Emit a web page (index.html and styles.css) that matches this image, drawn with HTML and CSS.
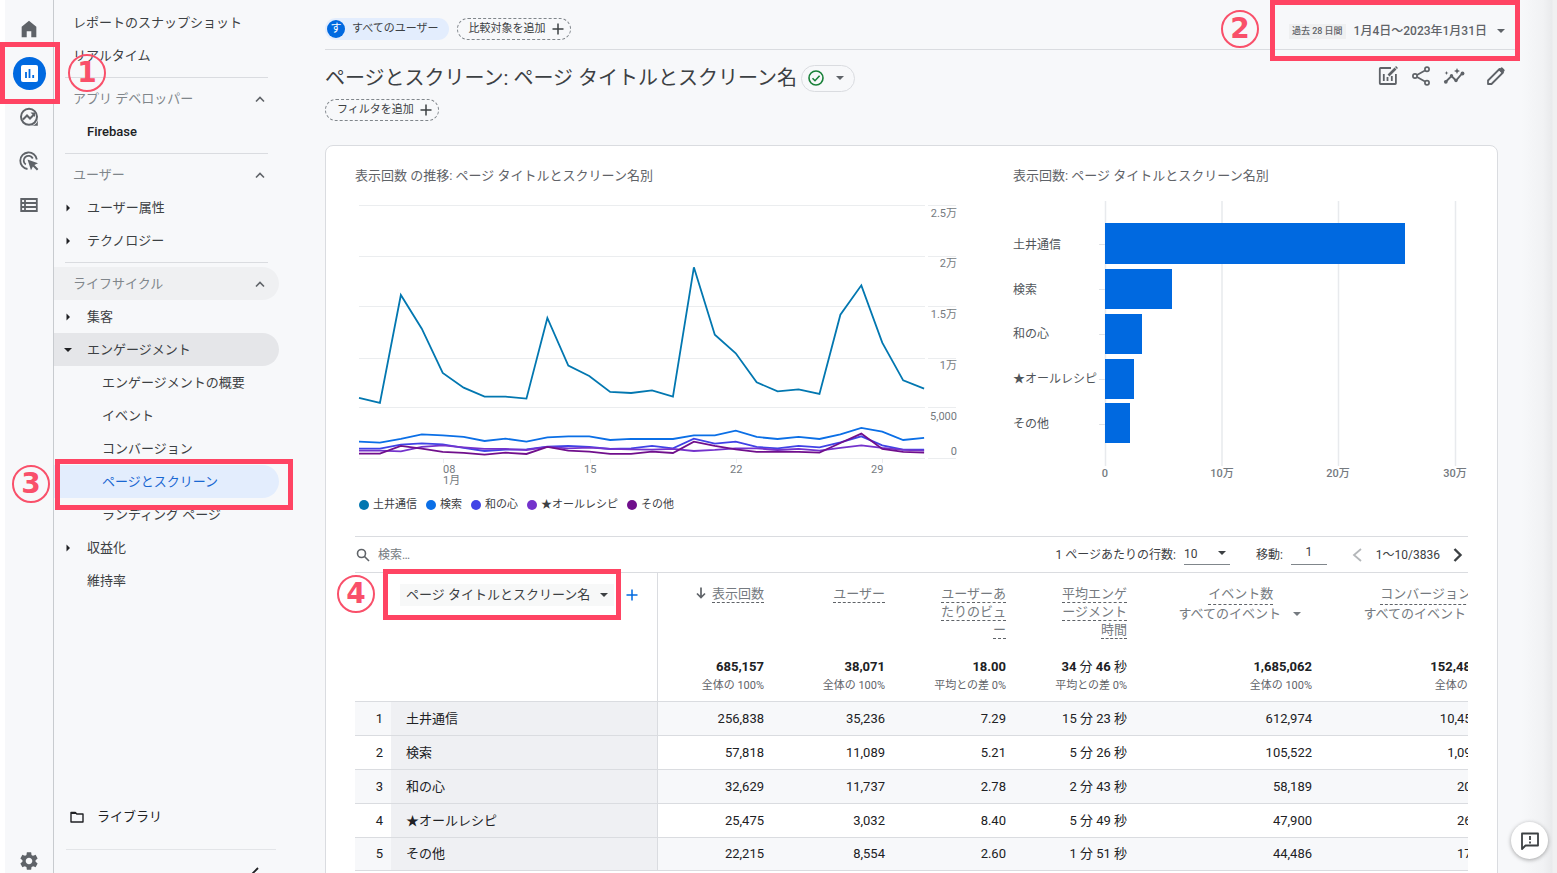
FILE: index.html
```html
<!DOCTYPE html>
<html lang="ja">
<head>
<meta charset="utf-8">
<title>ページとスクリーン</title>
<link rel="stylesheet" href="styles.css">
</head>
<body>
<svg class="sprite" aria-hidden="true">
  <symbol id="up" viewBox="0 0 12 12"><path d="M2 8.5l4-4 4 4" fill="none" stroke="currentColor" stroke-width="1.6"/></symbol>
  <symbol id="right" viewBox="0 0 12 12"><path d="M4.500 2.500v7l3.500-3.500z" fill="currentColor"/></symbol>
  <symbol id="down" viewBox="0 0 12 12"><path d="M2 4h8L6 8z" fill="currentColor"/></symbol>
  <symbol id="plus" viewBox="0 0 12 12"><path d="M6 .5v11M.5 6h11" fill="none" stroke="currentColor" stroke-width="1.5"/></symbol>
</svg>
<div class="app">
  <nav class="rail" aria-label="メイン">
    <a class="rail-item" href="#" aria-label="ホーム"><svg width="22" height="22" viewBox="0 0 24 24"><path d="M4 21V9.500L12 3l8 6.500V21h-5.500v-6.500h-5V21z" fill="currentColor"/></svg></a>
    <a class="rail-item" href="#" aria-label="レポート">
      <span class="rail-active"><svg width="17" height="17" viewBox="0 0 17 17"><rect width="17" height="17" rx="2" fill="#fff"/><path d="M5 7v6M8.500 4v9M12.200 10v3" stroke="#0069e0" stroke-width="1.800"/></svg></span>
      <span class="frame frame-rail"></span><span class="step step-rail">1</span>
    </a>
    <a class="rail-item" href="#" aria-label="探索"><svg width="20" height="20" viewBox="0 0 20 20"><g fill="none" stroke="currentColor" stroke-width="2"><circle cx="10" cy="9.800" r="8"/><path d="M4 12.500l4-4 3 3 4.500-4.500"/></g><path d="M11.500 5.500H16V10zM12 18.800c4 0 6.800-3 6.800-7v7z" fill="currentColor"/></svg></a>
    <a class="rail-item" href="#" aria-label="広告"><svg width="20" height="20" viewBox="0 0 20 20"><g fill="none" stroke="currentColor" stroke-width="1.800"><path d="M8.500 18A8.300 8.300 0 1 1 17.800 8.500"/><path d="M6.800 13.600A4.800 4.800 0 1 1 13.800 7.500"/></g><path d="M8.500 8.500l10.500 3.700-3.600 1.900 4 4-1.500 1.500-4-4-1.900 3.700z" fill="currentColor"/></svg></a>
    <a class="rail-item" href="#" aria-label="設定"><svg width="18" height="16" viewBox="0 0 18 16"><path d="M1.200 2h15.600v12H1.200zM1 6h16M1 10h16M5 2v12" fill="none" stroke="currentColor" stroke-width="1.800"/></svg></a>
    <a class="rail-item rail-bottom" href="#" aria-label="管理"><svg width="22" height="22" viewBox="0 0 24 24"><path fill="currentColor" d="M19.140 12.940c.04-.3.060-.61.060-.94 0-.32-.02-.64-.07-.94l2.030-1.580c.18-.14.23-.41.120-.61l-1.920-3.320c-.12-.22-.37-.29-.59-.22l-2.390.96c-.5-.38-1.030-.7-1.620-.94l-.36-2.540c-.04-.24-.24-.41-.48-.41h-3.840c-.24 0-.43.17-.47.41l-.36 2.540c-.59.24-1.130.57-1.620.94l-2.390-.96c-.22-.08-.47 0-.59.220L2.740 8.870c-.12.210-.08.470.120.610l2.030 1.580c-.05.3-.09.630-.09.940s.02.640.07.940l-2.030 1.580c-.18.140-.23.410-.12.610l1.920 3.320c.12.220.370.290.590.220l2.390-.96c.5.380 1.030.7 1.620.940l.36 2.540c.05.240.240.410.480.410h3.840c.24 0 .44-.17.470-.41l.36-2.540c.59-.24 1.130-.56 1.620-.94l2.390.96c.22.080.470 0 .59-.22l1.920-3.320c.12-.22.070-.47-.12-.61l-2.010-1.580zM12 15.600c-1.980 0-3.600-1.620-3.600-3.600s1.620-3.600 3.600-3.600 3.600 1.620 3.600 3.600-1.620 3.600-3.600 3.600z"/></svg></a>
  </nav>

  <nav class="menu" aria-label="レポート">
    <a class="row" href="#">レポートのスナップショット</a>
    <a class="row" href="#">リアルタイム</a>
    <hr>
    <button class="row group">アプリ デベロッパー<svg class="i12 chev"><use href="#up"/></svg></button>
    <a class="row sub latin" href="#">Firebase</a>
    <hr>
    <button class="row group">ユーザー<svg class="i12 chev"><use href="#up"/></svg></button>
    <a class="row tree" href="#"><svg class="i12"><use href="#right"/></svg>ユーザー属性</a>
    <a class="row tree" href="#"><svg class="i12"><use href="#right"/></svg>テクノロジー</a>
    <hr>
    <button class="row group hover">ライフサイクル<svg class="i12 chev"><use href="#up"/></svg></button>
    <a class="row tree" href="#"><svg class="i12"><use href="#right"/></svg>集客</a>
    <a class="row tree open" href="#"><svg class="i12"><use href="#down"/></svg>エンゲージメント</a>
    <a class="row leaf" href="#">エンゲージメントの概要</a>
    <a class="row leaf" href="#">イベント</a>
    <a class="row leaf" href="#">コンバージョン</a>
    <a class="row leaf current" href="#">ページとスクリーン<span class="frame frame-menu"></span><span class="step step-menu">3</span></a>
    <a class="row leaf" href="#">ランディング ページ</a>
    <a class="row tree" href="#"><svg class="i12"><use href="#right"/></svg>収益化</a>
    <a class="row sub" href="#">維持率</a>
    <div class="menu-foot">
      <a class="row library" href="#"><svg width="14" height="12" viewBox="0 0 14 12"><path d="M1 1.500h4.300l1.500 1.500H13v8H1z" fill="none" stroke="currentColor" stroke-width="1.400" stroke-linejoin="round"/><path d="M1 1h4.500L7 3H1z" fill="currentColor"/></svg>ライブラリ</a>
      <button class="collapse" aria-label="メニューを閉じる"><svg width="10" height="14" viewBox="0 0 10 14"><path d="M8 1L2 7l6 6" fill="none" stroke="currentColor" stroke-width="1.800"/></svg></button>
    </div>
  </nav>

  <main class="main">
    <header class="top">
      <button class="chip audience"><span class="avatar">す</span>すべてのユーザー</button>
      <button class="chip dashed">比較対象を追加<svg class="i12"><use href="#plus"/></svg></button>
      <button class="date"><span class="preset">過去 28 日間</span><span>1月4日〜2023年1月31日</span><svg class="i12"><use href="#down"/></svg><span class="frame frame-date"></span><span class="step step-date">2</span></button>
    </header>
    <div class="heading">
      <h1>ページとスクリーン: ページ タイトルとスクリーン名</h1>
      <button class="status" aria-label="データ品質"><svg width="16" height="16" viewBox="0 0 16 16"><circle cx="8" cy="8" r="7" fill="none" stroke="#188038" stroke-width="1.600"/><path d="M4.500 8.200l2.500 2.500 4.600-4.900" fill="none" stroke="#188038" stroke-width="1.600"/></svg><svg class="i12"><use href="#down"/></svg></button>
      <div class="tools">
        <button aria-label="比較を編集"><svg width="24" height="24" viewBox="0 0 24 24" fill="none" stroke="currentColor" stroke-width="1.800"><path d="M15 4H4.500Q3.800 4 3.800 4.700v14.600q0 .7.700.7h14.700q.7 0 .7-.7V10"/><path d="M7.800 10v7M11.500 13v4M15.800 12v5"/><path d="M12.500 11.500l7-7" stroke-width="2.600"/><path d="M20 4l1-1" stroke-width="2.600"/></svg></button>
        <button aria-label="共有"><svg width="24" height="24" viewBox="0 0 24 24" fill="none" stroke="currentColor" stroke-width="1.700"><circle cx="18" cy="5.300" r="2.100"/><circle cx="6" cy="12" r="2.100"/><circle cx="18" cy="18.700" r="2.100"/><path d="M8 11l8-4.600M8 13l8 4.600"/></svg></button>
        <button class="wide-gap" aria-label="インサイト"><svg width="24" height="24" viewBox="0 0 24 24"><path d="M4 17.500l5.500-5.500 4.500 4.500 6.500-7.500" fill="none" stroke="currentColor" stroke-width="1.900"/><g fill="currentColor"><circle cx="3.800" cy="17.800" r="1.900"/><circle cx="9.500" cy="11.700" r="1.700"/><circle cx="14" cy="16.500" r="1.700"/><circle cx="20.500" cy="9.500" r="1.900"/><path d="M15 4l.9 2.100L18 7l-2.100.9L15 10l-.9-2.100L12 7l2.100-.9zM4.500 7l.6 1.400 1.400.6-1.400.6-.6 1.400-.6-1.400L2.500 9l1.400-.6z"/></g></svg></button>
        <button aria-label="編集"><svg width="24" height="24" viewBox="0 0 24 24"><path d="M4 20v-3.500L15.500 5l3.500 3.500L7.500 20z" fill="none" stroke="currentColor" stroke-width="1.800" stroke-linejoin="round"/><path d="M14.500 6l2.300-2.300q.9-.9 1.800 0l1.700 1.700q.9.900 0 1.800L18 9.500z" fill="currentColor"/></svg></button>
      </div>
    </div>
    <button class="chip dashed filter">フィルタを追加<svg class="i12"><use href="#plus"/></svg></button>

    <section class="card">
      <div class="charts">
        <figure>
          <figcaption>表示回数 の推移: ページ タイトルとスクリーン名別</figcaption>
          <svg class="plot" viewBox="355 196 602 294">
            <path d="M359 205.500h566m3 0h28M359 256.500h566m3 0h28M359 306.500h566m3 0h28M359 358.500h566m3 0h28M359 407.500h566m3 0h28M359 458.500h566m3 0h28M443.500 459v4M590.500 459v4M736.500 459v4M882.500 459v4" stroke="#ebedef" fill="none"/>
            <g class="series" transform="translate(359 190) scale(20.930 .3333)">
              <polyline stroke="#0277b0" points="0,624 1,639 2,315 3,416 4,549 5,593 6,620 7,620 8,626 9,384 10,527 11,558 12,606 13,609 14,601 15,620 16,232 17,434 18,490 19,577 20,604 21,598 22,612 23,374 24,286 25,458 26,571 27,596"/>
              <polyline stroke="#0b6fe6" points="0,755 1,758 2,747 3,733 4,736 5,741 6,753 7,746 8,755 9,742 10,739 11,739 12,750 13,747 14,747 15,747 16,736 17,736 18,722 19,741 20,747 21,741 22,747 23,733 24,714 25,725 26,750 27,744"/>
              <polyline stroke="#4043e6" points="0,776 1,776 2,764 3,760 4,763 5,774 6,783 7,779 8,778 9,770 10,768 11,771 12,777 13,775 14,768 15,775 16,746 17,761 18,755 19,771 20,775 21,768 22,772 23,757 24,739 25,766 26,779 27,779"/>
              <polyline stroke="#7433cc" points="0,782 1,782 2,784 3,771 4,766 5,772 6,777 7,777 8,780 9,771 10,775 11,773 12,777 13,778 14,779 15,777 16,783 17,780 18,775 19,775 20,780 21,777 22,782 23,774 24,766 25,774 26,780 27,782"/>
              <polyline stroke="#700f8c" points="0,791 1,791 2,768 3,776 4,786 5,789 6,794 7,788 8,792 9,771 10,782 11,785 12,792 13,792 14,785 15,789 16,755 17,768 18,778 19,786 20,785 21,786 22,788 23,759 24,731 25,777 26,786 27,788"/>
            </g>
            <g class="axis" text-anchor="end"><text x="957" y="217">2.5万</text><text x="957" y="267">2万</text><text x="957" y="318">1.5万</text><text x="957" y="369">1万</text><text x="957" y="420">5,000</text><text x="957" y="455">0</text></g>
            <g class="axis"><text x="443" y="473">08</text><text x="443" y="484">1月</text><text x="584" y="473">15</text><text x="730" y="473">22</text><text x="871" y="473">29</text></g>
          </svg>
          <ul class="legend"><li class="s1">土井通信</li><li class="s2">検索</li><li class="s3">和の心</li><li class="s4">★オールレシピ</li><li class="s5">その他</li></ul>
        </figure>
        <figure>
          <figcaption>表示回数: ページ タイトルとスクリーン名別</figcaption>
          <svg class="plot" viewBox="1013 196 455 294">
            <path d="M1105.500 201v265M1222 201v265M1338.500 201v265M1455.500 201v265" stroke="#e8eaed" stroke-width="1.500"/>
            <path d="M1099 244.500h6M1099 289.500h6M1099 334.500h6M1099 379.500h6M1099 424.500h6" stroke="#e0e3e6"/>
            <g fill="#0069e0"><rect x="1105" y="223" width="300" height="41"/><rect x="1105" y="269" width="67" height="40"/><rect x="1105" y="314" width="37" height="40"/><rect x="1105" y="359" width="29" height="40"/><rect x="1105" y="403" width="25" height="40"/></g>
            <g class="names"><text x="1013" y="249">土井通信</text><text x="1013" y="294">検索</text><text x="1013" y="338">和の心</text><text x="1013" y="383">★オールレシピ</text><text x="1013" y="428">その他</text></g>
            <g class="axis heavy" text-anchor="middle"><text x="1105" y="477">0</text><text x="1222" y="477">10万</text><text x="1338" y="477">20万</text><text x="1455" y="477">30万</text></g>
          </svg>
        </figure>
      </div>

      <div class="bar">
        <label class="search"><svg width="14" height="14" viewBox="0 0 14 14"><g fill="none" stroke="currentColor" stroke-width="1.600"><circle cx="5.500" cy="5.500" r="4"/><path d="M8.500 8.500l4.500 4.500"/></g></svg><input type="search" placeholder="検索…" aria-label="検索"></label>
        <label for="rows">1 ページあたりの行数:</label>
        <span class="select"><select id="rows"><option>10</option><option>25</option></select><svg class="i12"><use href="#down"/></svg></span>
        <label for="goto" class="goto">移動:</label>
        <input id="goto" class="page" type="text" value="1">
        <button class="pager prev" aria-label="前へ"><svg width="20" height="20" viewBox="0 0 20 20"><path d="M13 4l-7 6 7 6" fill="none" stroke="#b4b7ba" stroke-width="1.800"/></svg></button>
        <span>1〜10/3836</span>
        <button class="pager" aria-label="次へ"><svg width="20" height="20" viewBox="0 0 20 20"><path d="M6.500 4l6 6-6 6" fill="none" stroke="currentColor" stroke-width="2.400"/></svg></button>
      </div>

      <div class="table-wrap">
        <span class="frame frame-table"></span><span class="step step-table">4</span>
        <div class="scroller">
          <table>
            <colgroup><col class="c-no"><col><col class="c-num"><col class="c-num"><col class="c-num"><col class="c-num"><col class="c-evt"><col class="c-evt"></colgroup>
            <thead>
              <tr class="labels">
                <th></th>
                <th class="name"><div class="dim"><button class="dim-pick">ページ タイトルとスクリーン名<svg class="i12"><use href="#down"/></svg></button><button class="add" aria-label="ディメンションを追加"><svg class="i12"><use href="#plus"/></svg></button></div></th>
                <th><svg class="sort" width="10" height="12" viewBox="0 0 10 12"><path d="M5 .5v10M1 6.500l4 4 4-4" fill="none" stroke="currentColor" stroke-width="1.700"/></svg><span class="u">表示回数</span></th>
                <th><span class="u">ユーザー</span></th>
                <th><span class="u">ユーザーあ<br>たりのビュ<br>ー</span></th>
                <th><span class="u">平均エンゲ<br>ージメント<br>時間</span></th>
                <th><div class="metric"><span class="u">イベント数</span><button>すべてのイベント<svg class="i12"><use href="#down"/></svg></button></div></th>
                <th><div class="metric"><span class="u">コンバージョン</span><button>すべてのイベント<svg class="i12"><use href="#down"/></svg></button></div></th>
              </tr>
              <tr class="totals">
                <td></td><td class="name"></td>
                <td><b>685,157</b><small>全体の 100%</small></td>
                <td><b>38,071</b><small>全体の 100%</small></td>
                <td><b>18.00</b><small>平均との差 0%</small></td>
                <td><b>34 <i>分</i> 46 <i>秒</i></b><small>平均との差 0%</small></td>
                <td><b>1,685,062</b><small>全体の 100%</small></td>
                <td><b>152,480.00</b><small>全体の 100%</small></td>
              </tr>
            </thead>
            <tbody>
              <tr><td>1</td><td class="name">土井通信</td><td>256,838</td><td>35,236</td><td>7.29</td><td>15 分 23 秒</td><td>612,974</td><td>10,450.00</td></tr>
              <tr><td>2</td><td class="name">検索</td><td>57,818</td><td>11,089</td><td>5.21</td><td>5 分 26 秒</td><td>105,522</td><td>1,090.00</td></tr>
              <tr><td>3</td><td class="name">和の心</td><td>32,629</td><td>11,737</td><td>2.78</td><td>2 分 43 秒</td><td>58,189</td><td>200.00</td></tr>
              <tr><td>4</td><td class="name">★オールレシピ</td><td>25,475</td><td>3,032</td><td>8.40</td><td>5 分 49 秒</td><td>47,900</td><td>260.00</td></tr>
              <tr><td>5</td><td class="name">その他</td><td>22,215</td><td>8,554</td><td>2.60</td><td>1 分 51 秒</td><td>44,486</td><td>170.00</td></tr>
            </tbody>
          </table>
        </div>
      </div>
    </section>
  </main>
  <button class="feedback" aria-label="フィードバック"><svg width="20" height="20" viewBox="0 0 20 20"><path d="M2 18V2.500h16v12H5.500z" fill="none" stroke="currentColor" stroke-width="1.800" stroke-linejoin="round"/><path d="M10 5v4M10 10.500v2" stroke="currentColor" stroke-width="1.800"/></svg></button>
</div>
</body>
</html>
```
FILE: styles.css
```css
* { box-sizing: border-box; }
body {
  margin: 0;
  background: #fff;
  color: #3c4043;
  font: 13px/18px Roboto, "Noto Sans CJK JP", sans-serif;
}
button, input, select { font: inherit; color: inherit; background: none; border: 0; padding: 0; margin: 0; border-radius: 0; outline: 0; }
a { color: inherit; text-decoration: none; }
svg { display: block; flex: none; }
.sprite { position: absolute; width: 0; height: 0; }
.i12 { width: 12px; height: 12px; }

.app {
  display: flex;
  height: 100vh;
  overflow: hidden;
  padding-left: 5px;
  background: linear-gradient(to right, #fff 5px, #f7f8fa 5px, #f7f8fa calc(100% - 36px), #f1f2f4 calc(100% - 14px), #e9eaec calc(100% - 5px), #f0f0f1 calc(100% - 4px));
}

/* icon rail */
.rail {
  display: flex;
  flex-direction: column;
  width: 49px;
  padding-top: 7px;
  border-right: 1px solid #c8cbcf;
  color: #5f6368;
}
.rail-item { position: relative; display: flex; align-items: center; justify-content: center; height: 44px; }
.rail-active { display: flex; align-items: center; justify-content: center; width: 33px; height: 33px; border-radius: 50%; background: #0069e0; }
.rail-bottom { margin-top: auto; height: 24px; }

/* report menu */
.menu { display: flex; flex-direction: column; width: 225px; padding-top: 6px; color: #3c4043; }
.menu hr { width: 203px; height: 1px; margin: 5px 0 4px 11px; border: 0; background: #dadce0; }
.row { position: relative; display: flex; align-items: center; flex: none; height: 33px; width: 100%; padding-left: 19px; border-radius: 0 17px 17px 0; text-align: left; }
.group { color: #80868b; }
.chev { margin: 0 13px 0 auto; color: #5f6368; }
.hover { background: #eff0f2; }
.sub { padding-left: 33px; }
.tree { padding-left: 8px; gap: 13px; }
.tree .i12 { color: #202124; }
.leaf { padding-left: 48px; }
.open { background: #e5e6e9; }
.current { background: #e3edfd; color: #1967d2; }
.latin { font-weight: 500; color: #202124; }
.menu-foot { margin-top: auto; }
.library { padding-left: 16px; gap: 13px; color: #202124; }
.collapse { display: block; width: 210px; height: 24px; margin: 16px 0 0 12px; padding: 17px 16px 0 0; border-top: 1px solid #e3e5e8; overflow: hidden; color: #202124; }
.collapse svg { margin-left: auto; }

/* main column */
.main { flex: 1; min-width: 0; margin: 0 42px 0 46px; }
.top { display: flex; align-items: center; height: 50px; padding: 9px 8px 0 0; border-bottom: 1px solid #dadce0; gap: 8px; }
.chip { display: flex; align-items: center; height: 22px; border-radius: 11px; font-size: 11px; white-space: nowrap; }
.audience { background: #e3edfd; gap: 7px; padding: 0 10px 0 2px; }
.avatar { width: 18px; height: 18px; border-radius: 50%; background: #0069e0; color: #fff; text-align: center; line-height: 18px; }
.dashed { border: 1px dashed #80868b; gap: 6px; padding: 0 6px 0 11px; }
.date { position: relative; display: flex; align-items: center; gap: 8px; margin: 4px 0 0 auto; font-size: 12px; font-weight: 500; color: #5f6368; white-space: nowrap; }
.preset { padding: 0 3px; background: #eff0f1; font-size: 9px; line-height: 15px; }
.heading { display: flex; align-items: center; height: 28px; margin-top: 14px; padding-right: 7px; }
h1 { margin: 0; font-size: 20px; line-height: 28px; font-weight: 400; white-space: nowrap; color: #3c4043; }
.status { display: flex; align-items: center; gap: 10px; width: 54px; height: 27px; margin-left: 4px; padding-left: 6px; border: 1px solid #dadce0; border-radius: 14px; color: #5f6368; }
.tools { display: flex; align-self: flex-start; gap: 9px; margin-left: auto; color: #5f6368; }
.wide-gap { margin-right: 9px; }
.filter { margin-top: 7px; }

/* report card */
.card { margin: 24px 17px 0 0; padding: 20px 29px; border: 1px solid #dadce0; border-radius: 8px; background: #fff; }
.charts { display: grid; grid-template-columns: 602fr 455fr; gap: 56px; }
figure { margin: 0; }
figcaption { line-height: 20px; color: #5f6368; white-space: nowrap; }
.plot { width: 100%; height: auto; margin-top: 10px; overflow: visible; }
.series polyline { fill: none; stroke-width: 1.8px; vector-effect: non-scaling-stroke; }
.axis { font-size: 11px; fill: #757a80; }
.heavy { font-weight: 500; }
.names { font-size: 12px; fill: #50555a; }
.legend { display: flex; gap: 9px; margin: 6px 0 0 4px; padding: 0; list-style: none; font-size: 11px; }
.legend li { display: flex; align-items: center; gap: 4px; }
.legend li::before { content: ""; width: 10px; height: 10px; border-radius: 50%; }
.legend .s1::before { background: #0277b0; }
.legend .s2::before { background: #0b6fe6; }
.legend .s3::before { background: #4043e6; }
.legend .s4::before { background: #7433cc; }
.legend .s5::before { background: #700f8c; }

.bar { display: flex; align-items: center; height: 37px; margin-top: 22px; border: solid #dadce0; border-width: 1px 0; gap: 8px; font-size: 12px; white-space: nowrap; }
.search { display: flex; align-items: center; gap: 8px; margin-right: auto; padding-left: 1px; color: #5f6368; }
.search input { width: 160px; }
.search input::placeholder { color: #757a80; opacity: 1; }
.select { position: relative; display: block; }
.select select { display: block; width: 46px; height: 20px; padding-bottom: 4px; border-bottom: 1px solid #80868b; appearance: none; }
.select svg { position: absolute; right: 2px; top: 2px; pointer-events: none; }
.goto { margin-left: 18px; }
.page { width: 36px; height: 20px; padding-bottom: 4px; border-bottom: 1px solid #80868b; text-align: center; }
.prev { margin-left: 13px; }

.table-wrap { position: relative; }
.scroller { overflow: hidden; }
table { width: 100%; min-width: 1157px; table-layout: fixed; border-collapse: separate; border-spacing: 0; }
.c-no { width: 36px; }
.c-num { width: 121px; }
.c-evt { width: 185px; }
th, td { padding: 0 15px 0 0; text-align: right; font-weight: 400; white-space: nowrap; }
th.name, td.name { padding: 0 0 0 15px; text-align: left; border-right: 1px solid #dadce0; }
.labels th { height: 84px; padding-top: 12px; vertical-align: top; color: #757a80; }
.labels th.name { padding-top: 11px; }
.u { padding-bottom: 1px; border-bottom: 1px dashed #5f6368; }
.sort { display: inline-block; margin-right: 6px; vertical-align: -1px; color: #5f6368; }
.dim { display: flex; align-items: center; gap: 12px; margin-left: -6px; color: #3c4043; }
.dim-pick { display: flex; align-items: center; gap: 8px; height: 22px; padding: 0 4px 0 6px; background: #f7f8f8; }
.add { color: #0069e0; }
.metric { display: inline-flex; flex-direction: column; align-items: center; margin-right: 9px; }
.metric button { display: flex; align-items: center; gap: 10px; }
.totals td { height: 44px; vertical-align: top; }
b, small { display: block; }
b { font-weight: 700; color: #202124; line-height: 20px; }
i { font-style: normal; font-weight: 400; }
small { font-size: 11px; line-height: 18px; color: #5f6368; }
tbody td { height: 34px; border-top: 1px solid #dadce0; color: #202124; }
tbody td:first-child { padding-right: 8px; }
tbody tr:nth-child(odd) td { background: #f7f8fa; }
tbody tr td.name, tbody tr:nth-child(odd) td.name { background: #eff0f3; }
tbody tr:last-child td { border-bottom: 1px solid #dadce0; }

.feedback { position: fixed; right: 9px; bottom: 14px; display: flex; align-items: center; justify-content: center; width: 37px; height: 37px; border-radius: 50%; background: #fff; box-shadow: 0 1px 4px rgba(0, 0, 0, .35); color: #3c4043; }

/* numbered call-outs laid over the screen */
.frame { position: absolute; z-index: 2; border: 5px solid #ff4463; pointer-events: none; }
.step { position: absolute; z-index: 3; width: 38px; height: 38px; border: 2px solid #f9506a; border-radius: 50%; color: #f9506a; font: 700 28px/34px "DejaVu Sans", sans-serif; text-align: center; pointer-events: none; }
.frame-rail { left: -5px; top: -9px; width: 60px; height: 62px; }
.step-rail { left: 63px; top: 3px; }
.frame-menu { left: 1px; top: -6px; width: 238px; height: 51px; }
.step-menu { left: -42px; top: 0; }
.frame-date { right: -13px; bottom: -21px; width: 250px; height: 61px; }
.step-date { right: 248px; top: -12px; }
.frame-table { left: 28px; top: -4px; width: 238px; height: 51px; }
.step-table { left: -18px; top: 2px; }
```
